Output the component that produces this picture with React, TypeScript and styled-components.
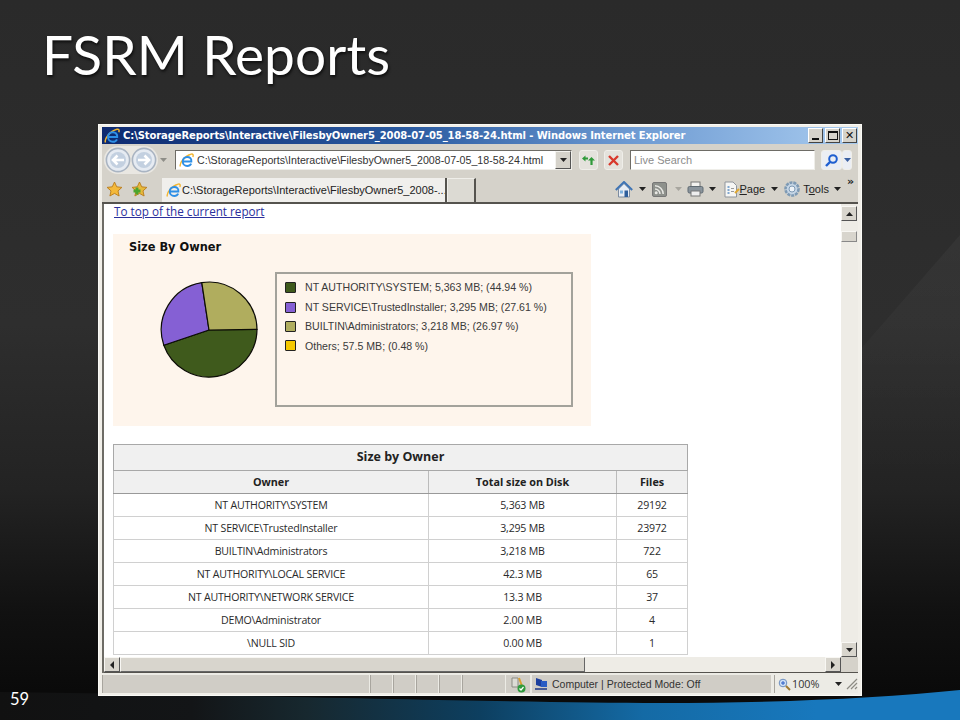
import styled, { createGlobalStyle } from "styled-components";

const OWNERS = [
  { owner: "NT AUTHORITY\\SYSTEM", size: "5,363 MB", files: "29192" },
  { owner: "NT SERVICE\\TrustedInstaller", size: "3,295 MB", files: "23972" },
  { owner: "BUILTIN\\Administrators", size: "3,218 MB", files: "722" },
  { owner: "NT AUTHORITY\\LOCAL SERVICE", size: "42.3 MB", files: "65" },
  { owner: "NT AUTHORITY\\NETWORK SERVICE", size: "13.3 MB", files: "37" },
  { owner: "DEMO\\Administrator", size: "2.00 MB", files: "4" },
  { owner: "\\NULL SID", size: "0.00 MB", files: "1" },
];

const LEGEND = [
  { color: "#3f5a1c", label: "NT AUTHORITY\\SYSTEM; 5,363 MB; (44.94 %)" },
  { color: "#8560d4", label: "NT SERVICE\\TrustedInstaller; 3,295 MB; (27.61 %)" },
  { color: "#b0ad5e", label: "BUILTIN\\Administrators; 3,218 MB; (26.97 %)" },
  { color: "#f5c800", label: "Others; 57.5 MB; (0.48 %)" },
];

const URL_TEXT = "C:\\StorageReports\\Interactive\\FilesbyOwner5_2008-07-05_18-58-24.html";

function IeLogo({ size = 16 }: { size?: number }) {
  return (
    <svg width={size} height={size} viewBox="0 0 16 16" style={{ flexShrink: 0 }}>
      <path d="M1.500 14.500C0 11 6 3 13 1.200c2-.4 2.500 1 1.800 3" fill="none" stroke="#f2b632" strokeWidth="1.500" />
      <path
        d="M5 9h8.200C13.500 6 11.500 4.200 8.800 4.200 6 4.200 4 6.300 4 9s2 4.800 4.800 4.800c2 0 3.500-1 4.200-2.500"
        fill="none"
        stroke="#2d8fe6"
        strokeWidth="2"
      />
    </svg>
  );
}

function NavArrow({ back }: { back?: boolean }) {
  return (
    <svg width="26" height="26" viewBox="0 0 26 26">
      <circle cx="13" cy="13" r="11.600" fill="#e6ebf2" stroke="#a9b4c2" strokeWidth="1.600" />
      <circle cx="13" cy="13" r="8" fill="#c3d0e0" />
      <path
        d={back ? "M19 13H8M12.500 8.500 8 13l4.500 4.500" : "M7 13h11M13.500 8.500 18 13l-4.500 4.500"}
        fill="none"
        stroke="#fff"
        strokeWidth="2.600"
      />
    </svg>
  );
}

function StarIcon({ plus }: { plus?: boolean }) {
  return (
    <svg width="17" height="17" viewBox="0 0 17 17">
      <path
        d="M8.500 1l2.200 4.800 5.200.6-3.900 3.500 1.100 5.100-4.600-2.600L3.900 15l1.100-5.100L1.100 6.400l5.200-.6z"
        fill={plus ? "#e6b93c" : "#f4b93a"}
        stroke="#b97a1a"
        strokeWidth=".9"
      />
      {plus && <path d="M6 6.500v7M2.500 10h7" stroke="#4aa52e" strokeWidth="2.800" />}
    </svg>
  );
}

function HomeIcon() {
  return (
    <svg width="18" height="17" viewBox="0 0 18 17">
      <path d="M3.500 8v8h11V8L9 2.500z" fill="#e8edf4" stroke="#7d8ca0" />
      <path d="M.8 9 9 1l8.200 8" fill="none" stroke="#3f74b4" strokeWidth="2" />
      <rect x="9.500" y="9.500" width="3.500" height="6.500" fill="#2e5f9c" />
      <rect x="5" y="9.500" width="3" height="3" fill="#7fb2de" />
    </svg>
  );
}

function FeedIcon() {
  return (
    <svg width="15" height="15" viewBox="0 0 15 15">
      <rect x=".5" y=".5" width="14" height="14" rx="1.500" fill="#8e918c" stroke="#777" />
      <circle cx="4.200" cy="10.800" r="1.500" fill="#e8e8e4" />
      <path d="M3 7a5 5 0 0 1 5 5M3 3.800A8.200 8.200 0 0 1 11.200 12" fill="none" stroke="#e8e8e4" strokeWidth="1.500" />
    </svg>
  );
}

function PrintIcon() {
  return (
    <svg width="17" height="16" viewBox="0 0 17 16">
      <rect x="4" y="1" width="9" height="5" fill="#f2f2f0" stroke="#777" />
      <rect x="1" y="5.500" width="15" height="6.500" rx="1.500" fill="#8a949c" stroke="#5f6a72" />
      <rect x="4" y="10" width="9" height="5" fill="#eee" stroke="#777" />
    </svg>
  );
}

function PageIcon() {
  return (
    <svg width="18" height="17" viewBox="0 0 18 17">
      <path d="M2 1h8l3.500 3.500V16H2z" fill="#f6f6f4" stroke="#8f959c" />
      <path d="M4.500 6h2M4.500 9h2M4.500 12h2" stroke="#5c8fc4" strokeWidth="1.400" />
      <path d="M8 7.500h3M8 10.500h3" stroke="#9a9a9a" />
      <path d="m12 12 4-4" stroke="#e0a830" strokeWidth="2" />
    </svg>
  );
}

function GearIcon() {
  return (
    <svg width="18" height="18" viewBox="0 0 18 18">
      <circle cx="9" cy="9" r="6.500" fill="#c6d6e6" stroke="#7e9ab4" strokeWidth="2.600" strokeDasharray="3 .9" />
      <circle cx="9" cy="9" r="3" fill="#eef3f8" stroke="#7e9ab4" />
    </svg>
  );
}

function GoIcon() {
  return (
    <svg width="13" height="11" viewBox="0 0 13 11">
      <path d="M0 3.500 3.500 .5v2H6v2H3.500v2z" fill="#2f9a3a" />
      <path d="M9.500 2 13 5.500h-2.400V10H8.400V5.500H6z" fill="#2f9a3a" />
    </svg>
  );
}

function StopIcon() {
  return (
    <svg width="13" height="13" viewBox="0 0 13 13">
      <path d="m2 2 9 9M11 2l-9 9" stroke="#d8392c" strokeWidth="2.400" />
    </svg>
  );
}

function SearchIcon() {
  return (
    <svg width="15" height="15" viewBox="0 0 15 15">
      <circle cx="9" cy="6" r="3.800" fill="none" stroke="#1f5fd0" strokeWidth="2" />
      <path d="M6 9l-4 4" stroke="#1f5fd0" strokeWidth="2.400" />
    </svg>
  );
}

function Caret({ dir = "down", color = "#222" }: { dir?: "down" | "up" | "left" | "right"; color?: string }) {
  const points = {
    down: "0,0 7,0 3.500,4",
    up: "0,4 7,4 3.500,0",
    left: "5,0 5,8 1,4",
    right: "1,0 1,8 5,4",
  }[dir];
  const wide = dir === "down" || dir === "up";
  return (
    <svg width={wide ? 7 : 6} height={wide ? 4 : 8} viewBox={wide ? "0 0 7 4" : "0 0 6 8"}>
      <polygon points={points} fill={color} />
    </svg>
  );
}

function PieChart() {
  return (
    <PieSvg width="100" height="100" viewBox="-50 -50 100 100">
      <g stroke="#0c0c06" strokeWidth="1.200" strokeLinejoin="round">
        <path d="M0 0 48 -.6A48 48 0 0 1 -45.200 15.300Z" fill="#3f5a1c" />
        <path d="M0 0-45.200 15.300A48 48 0 0 1-7.200-47.400Z" fill="#8560d4" />
        <path d="M0 0-7.200-47.400A48 48 0 0 1 48-.6Z" fill="#b0ad5e" />
      </g>
    </PieSvg>
  );
}

function SizeGrip() {
  return (
    <svg width="12" height="12" viewBox="0 0 12 12">
      <path d="M1 11 11 1M5 11l6-6M9 11l2-2" stroke="#8d8b84" strokeWidth="1.200" />
    </svg>
  );
}

export default function App() {
  return (
    <Slide>
      <GlobalStyle />
      <Backdrop viewBox="0 0 960 720" preserveAspectRatio="none">
        <defs>
          <linearGradient id="wave" x1="0" x2="1" y1="0" y2="0">
            <stop offset="0" stopColor="#111" />
            <stop offset=".2" stopColor="#131517" />
            <stop offset=".32" stopColor="#17282f" />
            <stop offset=".5" stopColor="#0d3f60" />
            <stop offset=".67" stopColor="#146aa5" />
            <stop offset=".85" stopColor="#1878bd" />
          </linearGradient>
          <linearGradient id="facet" x1="0" x2="0" y1="0" y2="1">
            <stop offset="0" stopColor="#fff" stopOpacity=".035" />
            <stop offset="1" stopColor="#fff" stopOpacity="0" />
          </linearGradient>
        </defs>
        <path d="M860 350 960 235V480H860Z" fill="url(#facet)" />
        <path d="M0 692C300 696 520 703 660 703 780 703 880 698 960 690V720H0Z" fill="url(#wave)" />
      </Backdrop>

      <Title>FSRM Reports</Title>

      <Browser>
        <TitleBar>
          <IeLogo />
          <TitleText>{URL_TEXT} - Windows Internet Explorer</TitleText>
          <WindowButtons>
            <WindowButton><MinGlyph /></WindowButton>
            <WindowButton><MaxGlyph /></WindowButton>
            <WindowButton>✕</WindowButton>
          </WindowButtons>
        </TitleBar>

        <NavRow>
          <NavPair>
            <NavArrow back />
            <NavArrow />
          </NavPair>
          <Caret color="#8e8e88" />
          <AddressBox>
            <IeLogo size={15} />
            <AddressText>{URL_TEXT}</AddressText>
            <DropButton><Caret /></DropButton>
          </AddressBox>
          <SmallButton><GoIcon /></SmallButton>
          <SmallButton><StopIcon /></SmallButton>
          <SearchBox>Live Search</SearchBox>
          <SearchButton><SearchIcon /></SearchButton>
          <SearchMenu><Caret color="#3a5fa0" /></SearchMenu>
        </NavRow>

        <TabRow>
          <Favorites>
            <StarIcon />
            <StarIcon plus />
          </Favorites>
          <ActiveTab>
            <IeLogo size={15} />
            <span>C:\StorageReports\Interactive\FilesbyOwner5_2008-...</span>
          </ActiveTab>
          <EmptyTab />
          <Tools>
            <ToolSlot $left={0}><HomeIcon /></ToolSlot>
            <ToolSlot $left={6}><Caret /></ToolSlot>
            <ToolSlot $left={6}><FeedIcon /></ToolSlot>
            <ToolSlot $left={8}><Caret color="#a8a69f" /></ToolSlot>
            <ToolSlot $left={5}><PrintIcon /></ToolSlot>
            <ToolSlot $left={5}><Caret /></ToolSlot>
            <ToolSlot $left={7}><PageIcon /></ToolSlot>
            <ToolSlot $left={-1}><ToolLabel><u>P</u>age</ToolLabel></ToolSlot>
            <ToolSlot $left={6}><Caret /></ToolSlot>
            <ToolSlot $left={5}><GearIcon /></ToolSlot>
            <ToolSlot $left={2}><ToolLabel>T<u>o</u>ols</ToolLabel></ToolSlot>
            <ToolSlot $left={5}><Caret /></ToolSlot>
            <More>»</More>
          </Tools>
        </TabRow>

        <Viewport>
          <Page>
            <TopLink href="#top">To top of the current report</TopLink>
            <ChartPanel>
              <ChartHeading>Size By Owner</ChartHeading>
              <ChartBody>
                <PieChart />
                <Legend>
                  {LEGEND.map(({ color, label }) => (
                    <LegendRow key={label}>
                      <Swatch $color={color} />
                      {label}
                    </LegendRow>
                  ))}
                </Legend>
              </ChartBody>
            </ChartPanel>

            <ReportTable>
              <colgroup>
                <col width="315" />
                <col width="188" />
                <col width="71" />
              </colgroup>
              <thead>
                <tr>
                  <TableTitle colSpan={3}>Size by Owner</TableTitle>
                </tr>
                <tr>
                  <HeadCell>Owner</HeadCell>
                  <HeadCell>Total size on Disk</HeadCell>
                  <HeadCell>Files</HeadCell>
                </tr>
              </thead>
              <tbody>
                {OWNERS.map(({ owner, size, files }) => (
                  <tr key={owner}>
                    <Cell>{owner}</Cell>
                    <Cell>{size}</Cell>
                    <Cell>{files}</Cell>
                  </tr>
                ))}
              </tbody>
            </ReportTable>
          </Page>

          <VerticalBar>
            <ScrollButton><Caret dir="up" /></ScrollButton>
            <VerticalThumb />
            <ScrollButton><Caret /></ScrollButton>
          </VerticalBar>

          <HorizontalBar>
            <ScrollButton><Caret dir="left" /></ScrollButton>
            <HorizontalThumb />
            <ScrollButton><Caret dir="right" /></ScrollButton>
          </HorizontalBar>
          <ScrollCorner />
        </Viewport>

        <StatusBar>
          <StatusPane $width={267} />
          <StatusPane $width={22} />
          <StatusPane $width={22} />
          <StatusPane $width={22} />
          <StatusPane $width={22} />
          <StatusPane $width={43} />
          <StatusIcon>
            <svg width="18" height="17" viewBox="0 0 18 17">
              <path d="M3 2h6v9H3z" fill="#dcdcd6" stroke="#8b8b84" />
              <path d="M10 2l3 8" stroke="#d8a030" strokeWidth="2" />
              <circle cx="12.500" cy="12.500" r="4" fill="#2e9a3c" />
              <path d="m10.500 12.500 1.500 1.500 2.500-3" fill="none" stroke="#fff" strokeWidth="1.200" />
            </svg>
          </StatusIcon>
          <ZonePane>
            <svg width="14" height="14" viewBox="0 0 14 14">
              <path d="M2 1 8 3v7L2 8z" fill="#1c3f9e" />
              <rect x="7" y="4" width="6" height="6" fill="#2a5cc4" />
              <path d="M1 12h12" stroke="#27408a" strokeWidth="1.600" />
            </svg>
            Computer | Protected Mode: Off
          </ZonePane>
          <ZoomPane>
            <svg width="13" height="13" viewBox="0 0 13 13">
              <circle cx="5" cy="5" r="3.800" fill="#cfe0f5" stroke="#6d8fc0" />
              <path d="M3 5h4M5 3v4" stroke="#2a5cc4" />
              <path d="m8 8 4 4" stroke="#a07a30" strokeWidth="2" />
            </svg>
            100%
            <ZoomCaret><Caret /></ZoomCaret>
          </ZoomPane>
          <SizeGrip />
        </StatusBar>
      </Browser>

      <SlideNumber>59</SlideNumber>
    </Slide>
  );
}

const GlobalStyle = createGlobalStyle`
  html, body {
    margin: 0;
    padding: 0;
    background: #111;
  }
  * {
    box-sizing: border-box;
  }
`;

const Slide = styled.div`
  position: relative;
  width: 960px;
  height: 720px;
  overflow: hidden;
  padding: 24px 0 0 98px;
  background: linear-gradient(180deg, #2a2a2a 0%, #2e2e2e 45%, #232323 68%, #111 85%, #0a0a0a 96%);
`;

const Backdrop = styled.svg`
  position: absolute;
  inset: 0;
  width: 960px;
  height: 720px;
`;

const Title = styled.h1`
  position: relative;
  margin: -2px 0 2px -56px;
  height: 100px;
  font: 400 55px/64px "Lato", "Open Sans", sans-serif;
  color: #fff;
  letter-spacing: 0.1px;
  text-shadow: 1px 2px 3px rgba(0, 0, 0, 0.7);
`;

const Browser = styled.div`
  position: relative;
  display: flex;
  flex-direction: column;
  width: 764px;
  height: 572px;
  padding: 2px 3px 2px;
  background: #f1efe9;
  border: 1px solid #fafaf6;
  font-family: "Liberation Sans", Arial, sans-serif;
  color: #222;
`;

const TitleBar = styled.div`
  display: flex;
  align-items: center;
  gap: 3px;
  height: 17px;
  flex-shrink: 0;
  padding: 0 1px 0 2px;
  background: linear-gradient(90deg, #0e2a70 0%, #2a5aa0 40%, #6d9ad2 70%, #a8cbef 100%);
`;

const TitleText = styled.div`
  flex: 1;
  font: 700 10px/17px "DejaVu Sans", sans-serif;
  letter-spacing: -0.1px;
  color: #fff;
  white-space: nowrap;
  overflow: hidden;
`;

const WindowButtons = styled.div`
  display: flex;
  gap: 2px;
`;

const WindowButton = styled.div`
  display: flex;
  align-items: center;
  justify-content: center;
  width: 15px;
  height: 15px;
  background: #d6d3cb;
  border: 1px solid;
  border-color: #fff #444 #444 #fff;
  font: 700 11px/1 "DejaVu Sans", sans-serif;
  color: #111;
`;

const MinGlyph = styled.span`
  display: block;
  width: 7px;
  height: 2px;
  margin-top: 6px;
  background: #111;
`;

const MaxGlyph = styled.span`
  display: block;
  width: 10px;
  height: 9px;
  border: 1px solid #111;
  border-top-width: 2px;
`;

const NavRow = styled.div`
  display: flex;
  align-items: center;
  height: 32px;
  flex-shrink: 0;
  padding: 0 0 0 2px;
  background: #d5d2ca;
`;

const NavPair = styled.div`
  display: flex;
  align-items: center;
  margin-right: 2px;
  padding: 1px;
  background: #e9e7e2;
  border-radius: 14px;
`;

const AddressBox = styled.div`
  display: flex;
  align-items: center;
  gap: 3px;
  width: 397px;
  height: 20px;
  margin: 0 7px 0 8px;
  padding: 0 0 0 3px;
  background: #fff;
  border: 1px solid;
  border-color: #6e6c66 #efeee9 #efeee9 #6e6c66;
`;

const AddressText = styled.div`
  flex: 1;
  font: 400 10.650px/18px "Liberation Sans", sans-serif;
  color: #333;
  white-space: nowrap;
  overflow: hidden;
`;

const DropButton = styled.div`
  display: flex;
  align-items: center;
  justify-content: center;
  width: 16px;
  height: 18px;
  background: #d5d2ca;
  border: 1px solid;
  border-color: #f4f3ef #555 #555 #f4f3ef;
`;

const SmallButton = styled.div`
  display: flex;
  align-items: center;
  justify-content: center;
  width: 19px;
  height: 20px;
  margin-right: 6px;
  background: #e4e2dc;
  border: 1px solid #efeee9;
  border-radius: 3px;

  & + & {
    margin-right: 0;
  }
`;

const SearchBox = styled.div`
  width: 185px;
  height: 20px;
  margin: 0 6px 0 7px;
  padding-left: 3px;
  background: #fff;
  border: 1px solid;
  border-color: #6e6c66 #efeee9 #efeee9 #6e6c66;
  font: 400 11px/18px "Liberation Sans", sans-serif;
  color: #8c8c8c;
`;

const SearchButton = styled(SmallButton)`
  width: 21px;
  margin: 0;
  background: #ebeef4;
`;

const SearchMenu = styled(SmallButton)`
  width: 10px;
  margin: 0;
  background: #ebeef4;
`;

const TabRow = styled.div`
  display: flex;
  align-items: flex-end;
  height: 28px;
  flex-shrink: 0;
  background: #d5d2ca;
  border-bottom: 2px solid #55534e;
`;

const Favorites = styled.div`
  display: flex;
  align-items: center;
  gap: 8px;
  width: 60px;
  height: 26px;
  padding-left: 4px;
`;

const ActiveTab = styled.div`
  display: flex;
  align-items: center;
  gap: 1px;
  width: 285px;
  height: 24px;
  padding-left: 4px;
  background: #f0efec;
  border-right: 2px solid #55534e;
  font: 400 11px/22px "Liberation Sans", sans-serif;
  color: #222;
  white-space: nowrap;
  overflow: hidden;
`;

const EmptyTab = styled.div`
  width: 29px;
  height: 24px;
  background: #dcdad3;
  border-right: 2px solid #55534e;
  border-top: 1px solid #efeee9;
  border-left: 1px solid #efeee9;
`;

const Tools = styled.div`
  display: flex;
  align-items: center;
  flex: 1;
  justify-content: flex-end;
  height: 26px;
  padding-right: 4px;
`;

const ToolSlot = styled.span<{ $left: number }>`
  display: flex;
  align-items: center;
  margin-left: ${(p) => p.$left}px;
`;

const ToolLabel = styled.span`
  font: 400 11px/1 "Liberation Sans", sans-serif;
  color: #222;
`;

const More = styled.span`
  align-self: flex-start;
  margin-left: 6px;
  font: 700 11px/12px "DejaVu Sans", sans-serif;
`;

const Viewport = styled.div`
  display: grid;
  flex: 1;
  min-height: 0;
  grid-template-columns: 1fr 17px;
  grid-template-rows: 1fr 16px;
  background: #fff;
  border-left: 2px solid #6e6c66;
`;

const Page = styled.div`
  min-height: 0;
  padding: 0 0 0 9px;
  background: #fff;
`;

const TopLink = styled.a`
  display: block;
  margin-left: 1px;
  height: 30px;
  font: 400 11.700px/14px "Open Sans", sans-serif;
  color: #2a2f9c;
`;

const ChartPanel = styled.div`
  width: 478px;
  height: 192px;
  padding: 6px 16px 0;
  background: #fef5ec;
`;

const ChartHeading = styled.div`
  font: 700 11.400px/14px "DejaVu Sans", sans-serif;
  color: #111;
`;

const ChartBody = styled.div`
  display: flex;
  align-items: flex-start;
  gap: 16px;
  margin: 18px 0 0 30px;
`;

const PieSvg = styled.svg`
  flex-shrink: 0;
  margin-top: 8px;
`;

const Legend = styled.div`
  width: 298px;
  height: 135px;
  padding: 4px 8px;
  border: 2px solid #a3a29b;
`;

const LegendRow = styled.div`
  display: flex;
  align-items: center;
  gap: 9px;
  height: 19.400px;
  font: 400 10.600px/1 "Liberation Sans", sans-serif;
  color: #3a3a3a;
  white-space: nowrap;
`;

const Swatch = styled.span<{ $color: string }>`
  width: 11px;
  height: 11px;
  flex-shrink: 0;
  background: ${(p) => p.$color};
  border: 1px solid #222;
  border-radius: 1px;
`;

const ReportTable = styled.table`
  width: 574px;
  margin-top: 18px;
  border-collapse: collapse;
  table-layout: fixed;
  border: 1px solid #8e8e8e;
`;

const TableTitle = styled.th`
  height: 26px;
  padding: 0;
  background: #f0f0f0;
  border: 1px solid #a8a8a8;
  font: 700 12.500px/1 "Open Sans", sans-serif;
  color: #222;
`;

const HeadCell = styled.th`
  height: 23px;
  padding: 0;
  background: #f0f0f0;
  border: 1px solid #bbb;
  border-bottom-color: #999;
  font: 700 10.800px/1 "Open Sans", sans-serif;
  color: #222;
`;

const Cell = styled.td`
  height: 23px;
  padding: 0;
  text-align: center;
  border: 1px solid #d0d0d0;
  font: 400 10.600px/1 "Open Sans", sans-serif;
  color: #2a2a2a;
  letter-spacing: -0.2px;
`;

const VerticalBar = styled.div`
  display: flex;
  flex-direction: column;
  padding-top: 2px;
  background: #eeece6;
`;

const ScrollButton = styled.div`
  display: flex;
  align-items: center;
  justify-content: center;
  width: 16px;
  height: 15px;
  flex-shrink: 0;
  background: #d8d5cd;
  border: 1px solid;
  border-color: #f8f7f3 #555 #555 #f8f7f3;
`;

const VerticalThumb = styled.div`
  width: 16px;
  height: 11px;
  margin: 10px 0 auto;
  background: #d8d5cd;
  border: 1px solid;
  border-color: #f8f7f3 #888 #888 #f8f7f3;
`;

const HorizontalBar = styled.div`
  display: flex;
  background: #eeece6;
  border-bottom: 1px solid #55534e;

  ${ScrollButton}:last-child {
    margin-left: auto;
  }
`;

const HorizontalThumb = styled.div`
  width: 465px;
  height: 15px;
  background: #d8d5cd;
  border: 1px solid;
  border-color: #f8f7f3 #666 #666 #f8f7f3;
`;

const ScrollCorner = styled.div`
  background: #d5d2ca;
  border-bottom: 1px solid #55534e;
`;

const StatusBar = styled.div`
  display: flex;
  align-items: center;
  height: 20px;
  flex-shrink: 0;
  padding-top: 2px;
  background: #ecebe5;
`;

const StatusPane = styled.div<{ $width: number }>`
  width: ${(p) => p.$width}px;
  height: 18px;
  margin-right: 1px;
  background: #d0cdc6;
  border-left: 1px solid #a8a59e;
`;

const StatusIcon = styled.div`
  display: flex;
  align-items: center;
  justify-content: center;
  width: 24px;
  height: 18px;
  margin-right: 2px;
  background: #d0cdc6;
`;

const ZonePane = styled.div`
  display: flex;
  align-items: center;
  gap: 4px;
  width: 239px;
  height: 18px;
  margin-right: 3px;
  padding-left: 2px;
  background: #d0cdc6;
  font: 400 10.500px/1 "Liberation Sans", sans-serif;
  color: #333;
  white-space: nowrap;
`;

const ZoomPane = styled.div`
  display: flex;
  align-items: center;
  gap: 1px;
  flex: 1;
  height: 18px;
  padding-left: 3px;
  border-left: 1px solid #a8a59e;
  background: #ecebe5;
  font: 400 10.800px/1 "Open Sans", sans-serif;
  color: #333;
`;

const ZoomCaret = styled.span`
  display: flex;
  margin-left: 15px;
`;

const SlideNumber = styled.div`
  position: absolute;
  left: 10px;
  top: 690px;
  font: 400 16.500px/18px "Lato", sans-serif;
  color: #fff;
`;
